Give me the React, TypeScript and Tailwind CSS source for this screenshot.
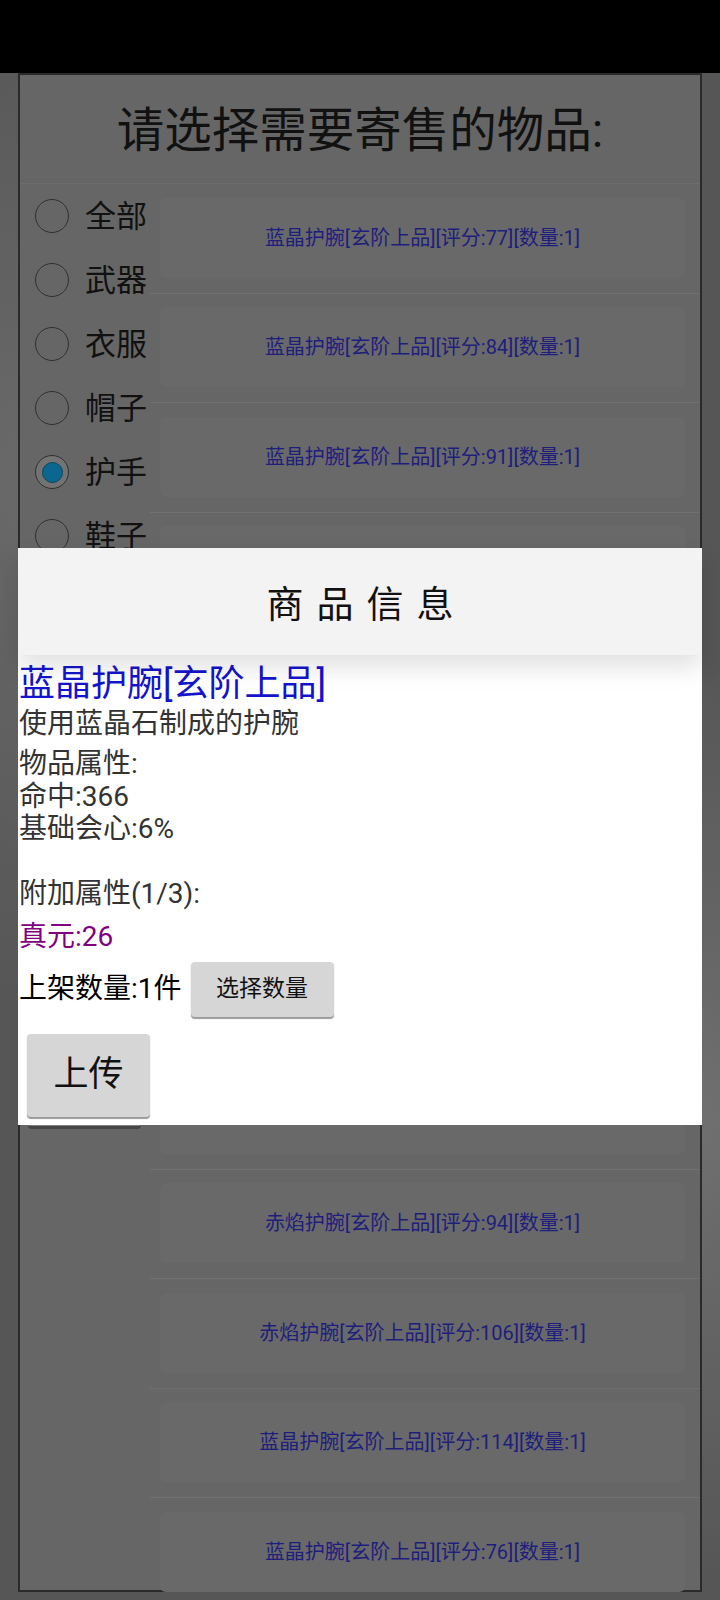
import React from "react";

const FONT = { fontFamily: 'Roboto, "Noto Sans CJK SC", "Noto Sans", sans-serif' };

const categories = ["全部", "武器", "衣服", "帽子", "护手", "鞋子"];

// rows 4-9 sit behind the info popup, so their labels are not shown
const items = [
  "蓝晶护腕[玄阶上品][评分:77][数量:1]",
  "蓝晶护腕[玄阶上品][评分:84][数量:1]",
  "蓝晶护腕[玄阶上品][评分:91][数量:1]",
  "",
  "",
  "",
  "",
  "",
  "",
  "赤焰护腕[玄阶上品][评分:94][数量:1]",
  "赤焰护腕[玄阶上品][评分:106][数量:1]",
  "蓝晶护腕[玄阶上品][评分:114][数量:1]",
  "蓝晶护腕[玄阶上品][评分:76][数量:1]",
];

function Radio({ checked }: { checked?: boolean }) {
  if (checked) {
    return (
      <div className="w-[34px] h-[34px] rounded-full border-[1.5px] border-[#2f2f2f] bg-[#737373] flex items-center justify-center">
        <div className="w-[21px] h-[21px] rounded-full bg-[#0b6790] border border-[#08475f]" />
      </div>
    );
  }
  return <div className="w-[34px] h-[34px] rounded-full border-[1.5px] border-[#2f2f2f]" />;
}

export default function App() {
  return (
    <div
      className="relative w-[720px] h-[1600px] overflow-hidden bg-[#565656] bg-[radial-gradient(circle_at_10%_30%,#6a6a6a_0,transparent_40%),radial-gradient(circle_at_95%_70%,#707070_0,transparent_35%)]"
      style={FONT}
    >
      {/* status bar */}
      <div className="h-[73px] bg-black" />

      {/* dimmed sell dialog */}
      <div className="ml-[18px] w-[684px] h-[1519px] border-2 border-[#2a2a2a] bg-[#666666] flex flex-col">
        <div className="h-[109px] pt-[6px] flex items-center justify-center border-b border-[#6d6d6d] text-[47.5px] text-[#111]">
          请选择需要寄售的物品:
        </div>

        <div className="flex flex-1 min-h-0">
          {/* categories */}
          <div className="w-[130px] flex flex-col">
            {categories.map((c, i) => (
              <div key={c} className="h-16 flex items-center pl-[15px] gap-[16px]">
                <Radio checked={i === 4} />
                <span className="text-[31px] text-[#111] leading-none">{c}</span>
              </div>
            ))}
            <div className="mt-[491px] ml-[8px] w-[113px] h-[70px] bg-[#808080] border-b-[3px] border-[#454545] rounded-sm" />
          </div>

          {/* item list */}
          <div className="flex-1 flex flex-col">
            {items.map((t, i) => (
              <div key={i} className="border-b border-[#707070] pt-[13.5px] pb-[15px] pl-[10px] pr-[15px]">
                <div className="h-[80px] rounded-md bg-[#696969] flex items-center justify-center text-[20px] text-[#1e1e7c]">
                  {t}
                </div>
              </div>
            ))}
          </div>
        </div>
      </div>

      {/* item info popup */}
      <div className="absolute left-[18px] top-[548px] w-[684px] h-[577px] bg-white flex flex-col">
        <div className="relative z-10 h-[107px] pt-[8px] bg-[#f3f3f3] flex items-center justify-center shadow-[0_12px_24px_rgba(0,0,0,0.12)]">
          <span className="text-[37px] text-[#111] tracking-[13px] pl-[13px]">商品信息</span>
        </div>

        <div className="flex flex-col pl-[1px]">
          <div className="mt-[8px] text-[36px] leading-[42px] text-[#1414cc]">蓝晶护腕[玄阶上品]</div>
          <div className="mt-[1px] text-[28px] leading-[36px] text-[#333]">使用蓝晶石制成的护腕</div>
          <div className="mt-[6px] text-[28px] leading-[32.5px] text-[#333]">
            <div>物品属性:</div>
            <div>命中:366</div>
            <div>基础会心:6%</div>
            <div>&nbsp;</div>
            <div>附加属性(1/3):</div>
          </div>
          <div className="mt-[8px] text-[28px] leading-[36px] text-[#800080]">真元:26</div>

          <div className="mt-[7px] flex items-center">
            <span className="text-[28px] text-black">上架数量:1件</span>
            <button className="ml-[9px] w-[143px] h-[55px] bg-[#d6d6d6] rounded-sm shadow-[0_2px_1px_#9a9a9a] text-[23px] text-[#111]">
              选择数量
            </button>
          </div>

          <button className="mt-[17px] ml-[8px] w-[123px] h-[83px] bg-[#d6d6d6] rounded-sm shadow-[0_2px_1px_#9a9a9a] text-[35px] text-[#111]">
            上传
          </button>
        </div>
      </div>
    </div>
  );
}
